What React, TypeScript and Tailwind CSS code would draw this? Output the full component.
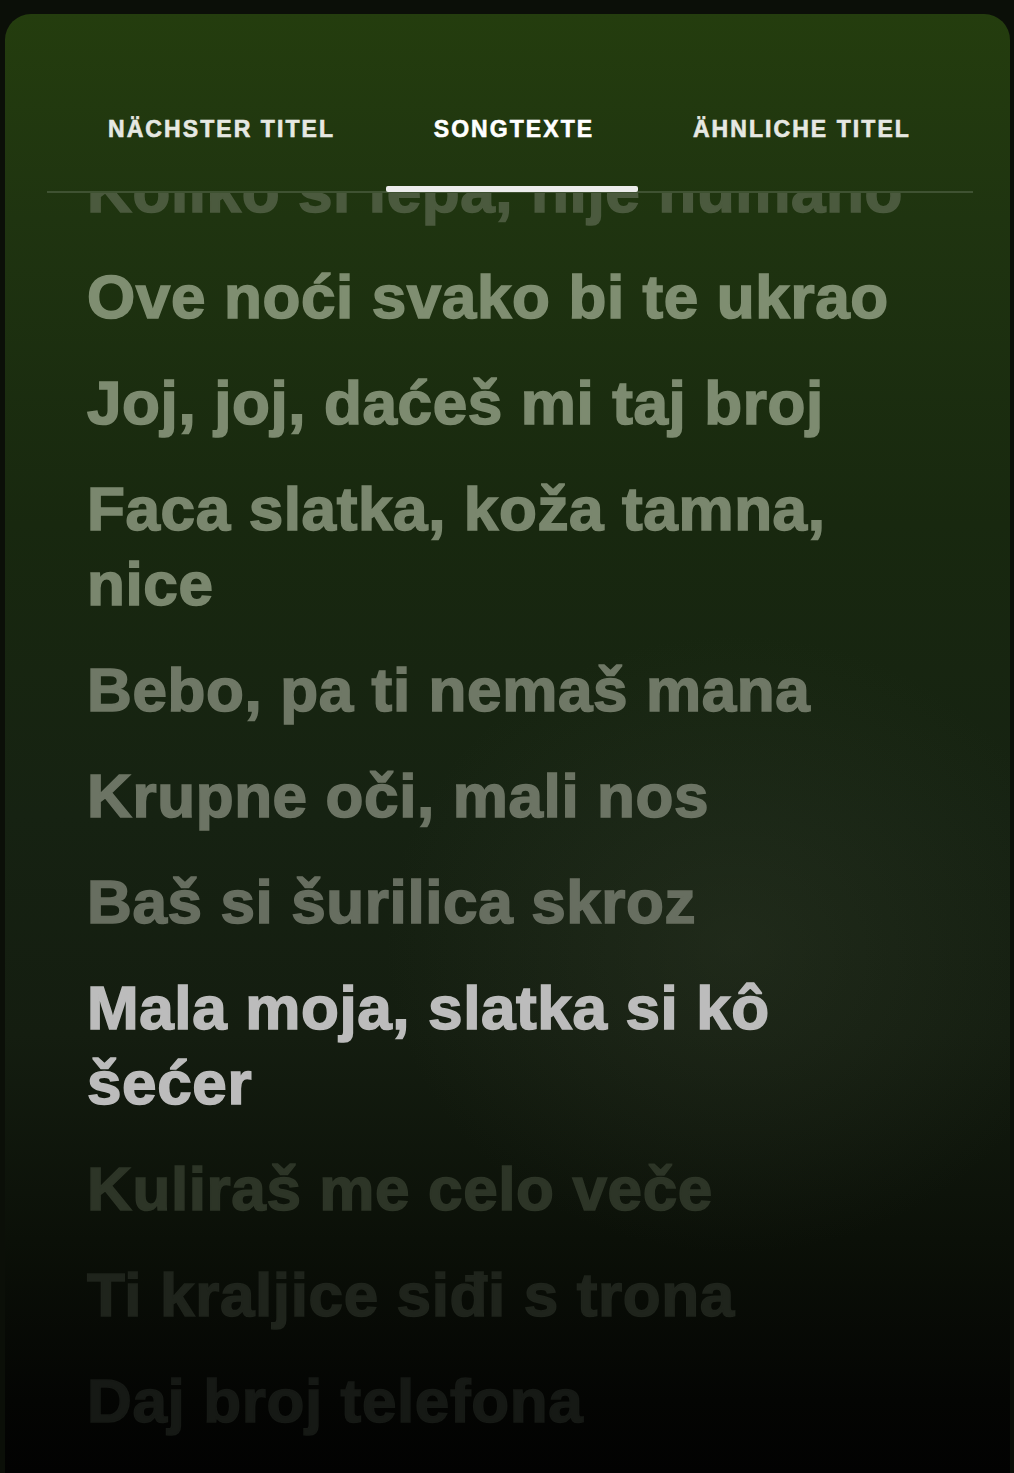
const tabs = [
  { label: "NÄCHSTER TITEL", active: false },
  { label: "SONGTEXTE", active: true },
  { label: "ÄHNLICHE TITEL", active: false },
];

const lyrics = [
  { lines: ["Koliko si lepa, nije humano"], color: "text-[#4b5a3e]" },
  { lines: ["Ove noći svako bi te ukrao"], color: "text-[#7f8e71]" },
  { lines: ["Joj, joj, daćeš mi taj broj"], color: "text-[#7d8b70]" },
  { lines: ["Faca slatka, koža tamna,", "nice"], color: "text-[#7a876e]" },
  { lines: ["Bebo, pa ti nemaš mana"], color: "text-[#6f7866]" },
  { lines: ["Krupne oči, mali nos"], color: "text-[#6c7464]" },
  { lines: ["Baš si šurilica skroz"], color: "text-[#676e60]" },
  { lines: ["Mala moja, slatka si kô", "šećer"], color: "text-[#bcbcbc]" },
  { lines: ["Kuliraš me celo veče"], color: "text-[#2d3527]" },
  { lines: ["Ti kraljice siđi s trona"], color: "text-[#1f241c]" },
  { lines: ["Daj broj telefona"], color: "text-[#161915]" },
];

export default function App() {
  return (
    <div className="min-h-[1473px] w-full bg-[#0b0f08] pt-[14px] pl-[5px] pr-[4px] font-['Liberation_Sans',Arial,sans-serif]">
      <div className="relative h-[1459px] overflow-hidden rounded-t-[26px] bg-[linear-gradient(180deg,#243d0e_0%,#1f3410_14%,#18280f_35%,#162212_55%,#141d10_70%,#0b1008_84%,#040503_95%,#020202_100%)]">
        {/* soft glow on right middle */}
        <div className="pointer-events-none absolute left-[380px] top-[620px] h-[620px] w-[700px] rounded-full bg-[radial-gradient(closest-side,rgba(60,70,50,0.28),transparent)]" />

        {/* TABS */}
        <div className="relative pl-[42px] pr-[37px] pt-[94px]">
          <div className="flex justify-between pl-[61px] pr-[62px]">
            {tabs.map((t) => (
              <div
                key={t.label}
                className={`text-[23px] font-bold leading-[42px] tracking-[0.09em] [-webkit-text-stroke:0.6px_currentColor] ${t.active ? "text-white" : "text-[#e6e8e2]"}`}
              >
                {t.label}
              </div>
            ))}
          </div>
          <div className="relative mt-[41px] h-[2px] bg-[#3f5232]">
            <div className="absolute left-[339px] top-[-5px] h-[6px] w-[252px] rounded-[2px] bg-[#ececec]" />
          </div>
        </div>

        {/* LYRICS */}
        <div className="relative h-[1270px] overflow-hidden">
          <div className="-mt-[40px] flex flex-col gap-[31px] pl-[82px]">
            {lyrics.map((l, i) => (
              <div
                key={i}
                className={`text-[62px] font-bold leading-[75px] tracking-[0.01em] [-webkit-text-stroke:1.6px_currentColor] ${l.color}`}
              >
                {l.lines.map((line, j) => (
                  <div key={j}>{line}</div>
                ))}
              </div>
            ))}
          </div>
        </div>
      </div>
    </div>
  );
}
